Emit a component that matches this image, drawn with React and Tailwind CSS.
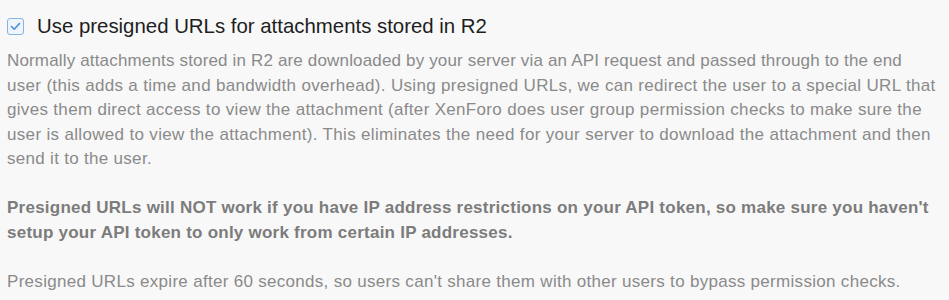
export default function App() {
  return (
    <div className="w-[949px] h-[300px] bg-[#f8f8f8] overflow-hidden font-['Liberation_Sans',Arial,sans-serif]">
      <div className="pl-[7px] pt-[13px]">
        <label className="flex items-center gap-[13px]">
          <span className="w-[17px] h-[17px] rounded-[3px] border border-[#86b4e4] bg-[#eef5fd] flex items-center justify-center">
            <svg width="11" height="9" viewBox="0 0 11 9" fill="none">
              <path d="M1.5 4.5 L4.2 7.2 L9.5 1.5" stroke="#4a8fd8" strokeWidth="1.6" strokeLinecap="round" strokeLinejoin="round" />
            </svg>
          </span>
          <span className="text-[20.4px] leading-[26px] text-[#1e1e1e]">Use presigned URLs for attachments stored in R2</span>
        </label>
        <div className="mt-[10px] text-[17px] leading-[24.5px] text-[#8a8a8a] whitespace-nowrap">
          <p>
            <span className="tracking-[0.16px]">Normally attachments stored in R2 are downloaded by your server via an API request and passed through to the end</span>
            <br />
            <span className="tracking-[0.32px]">user (this adds a time and bandwidth overhead). Using presigned URLs, we can redirect the user to a special URL that</span>
            <br />
            <span className="tracking-[0.32px]">gives them direct access to view the attachment (after XenForo does user group permission checks to make sure the</span>
            <br />
            <span className="tracking-[0.33px]">user is allowed to view the attachment). This eliminates the need for your server to download the attachment and then</span>
            <br />
            <span className="tracking-[0.3px]">send it to the user.</span>
          </p>
          <p className="mt-[24.5px] font-bold text-[#7c7c7c] tracking-[0.24px]">
            Presigned URLs will NOT work if you have IP address restrictions on your API token, so make sure you haven't
            <br />
            setup your API token to only work from certain IP addresses.
          </p>
          <p className="mt-[24.5px] tracking-[0.3px]">
            Presigned URLs expire after 60 seconds, so users can't share them with other users to bypass permission checks.
          </p>
        </div>
      </div>
    </div>
  );
}
